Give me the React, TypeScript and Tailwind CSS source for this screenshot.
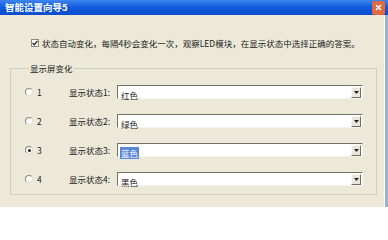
import React from "react";

const rows = [
  { n: "1", label: "显示状态1:", value: "红色", checked: false, selected: false },
  { n: "2", label: "显示状态2:", value: "绿色", checked: false, selected: false },
  { n: "3", label: "显示状态3:", value: "蓝色", checked: true, selected: true },
  { n: "4", label: "显示状态4:", value: "黑色", checked: false, selected: false },
];

function Radio({ checked }: { checked: boolean }) {
  return (
    <span className="flex h-[8px] w-[8px] items-center justify-center rounded-full border border-t-[#8a8a80] border-l-[#8a8a80] border-r-[#e0ded2] border-b-[#e0ded2] bg-white">
      {checked && <span className="h-[3px] w-[3px] rounded-full bg-[#222]" />}
    </span>
  );
}

function Combo({ value, selected }: { value: string; selected: boolean }) {
  return (
    <div className="flex h-[14px] w-[246px] items-center border border-t-[#707068] border-l-[#707068] border-r-[#f4f3ec] border-b-[#f4f3ec] bg-white">
      <div className="flex-1 pl-[2px]">
        <span
          className={
            selected
              ? "bg-[#5a88d6] px-[1px] text-[8.5px] leading-[11px] text-white"
              : "px-[1px] text-[8.5px] leading-[11px] text-[#222]"
          }
        >
          {value}
        </span>
      </div>
      <div className="mr-[1px] flex h-[11px] w-[10px] items-center justify-center border border-t-[#f8f8f2] border-l-[#f8f8f2] border-r-[#6e6e66] border-b-[#6e6e66] bg-[#e8e6da]">
        <svg width="5" height="3" viewBox="0 0 5 3">
          <path d="M0 0h5L2.5 3z" fill="#222" />
        </svg>
      </div>
    </div>
  );
}

export default function App() {
  return (
    <div className="flex h-[207px] w-[388px] flex-col bg-[#ece9d8] font-['Noto_Sans_CJK_SC','Liberation_Sans',sans-serif] text-[#222]">
      {/* Title bar */}
      <div className="flex h-[15px] shrink-0 items-center justify-between bg-[#1a5ddc] bg-gradient-to-b from-[#3d86f2] via-[#1259dc] to-[#0a4ccc] pl-[5px] pr-[3px]">
        <span className="whitespace-nowrap text-[9.5px] font-bold leading-none text-white">智能设置向导5</span>
        <div className="flex h-[14px] w-[13px] shrink-0 items-center justify-center rounded-[2px] bg-[#e0693e]">
          <svg width="7" height="7" viewBox="0 0 7 7">
            <path d="M1 1L6 6M6 1L1 6" stroke="#ffffff" strokeWidth="1.5" />
          </svg>
        </div>
      </div>

      <div className="flex flex-1">
        <div className="w-[380px]">
          {/* Checkbox line */}
          <div className="mt-[22px] flex h-[12px] items-center whitespace-nowrap pl-[31px]">
            <span className="flex h-[8px] w-[8px] items-center justify-center border border-[#8a8a80] bg-white">
              <svg width="6" height="6" viewBox="0 0 6 6">
                <path d="M0.6 3L2.3 4.8L5.4 1" stroke="#222" strokeWidth="1.3" fill="none" />
              </svg>
            </span>
            <span className="ml-[3px] text-[8.5px] leading-none">
              状态自动变化，每隔4秒会变化一次，观察LED模块，在显示状态中选择正确的答案。
            </span>
          </div>

          {/* Group box */}
          <fieldset className="ml-[10px] mt-[13px] w-[367px] border border-[#d0cebf] pb-[8px] pl-[14px] pt-[11px]">
            <legend className="ml-[4px] px-[1px] text-[8.5px] leading-[12px]">显示屏变化</legend>
            <div className="flex flex-col gap-[15px]">
              {rows.map((r) => (
                <div key={r.n} className="flex items-center">
                  <div className="flex w-[44px] items-center gap-[4px]">
                    <Radio checked={r.checked} />
                    <span className="text-[8.5px] leading-none">{r.n}</span>
                  </div>
                  <span className="w-[48px] whitespace-nowrap text-[8.5px] leading-none">{r.label}</span>
                  <Combo value={r.value} selected={r.selected} />
                </div>
              ))}
            </div>
          </fieldset>
        </div>
        <div className="ml-[4px] w-[1px] bg-white" />
        <div className="w-[3px] bg-[#9fb0d8]" />
      </div>
    </div>
  );
}
